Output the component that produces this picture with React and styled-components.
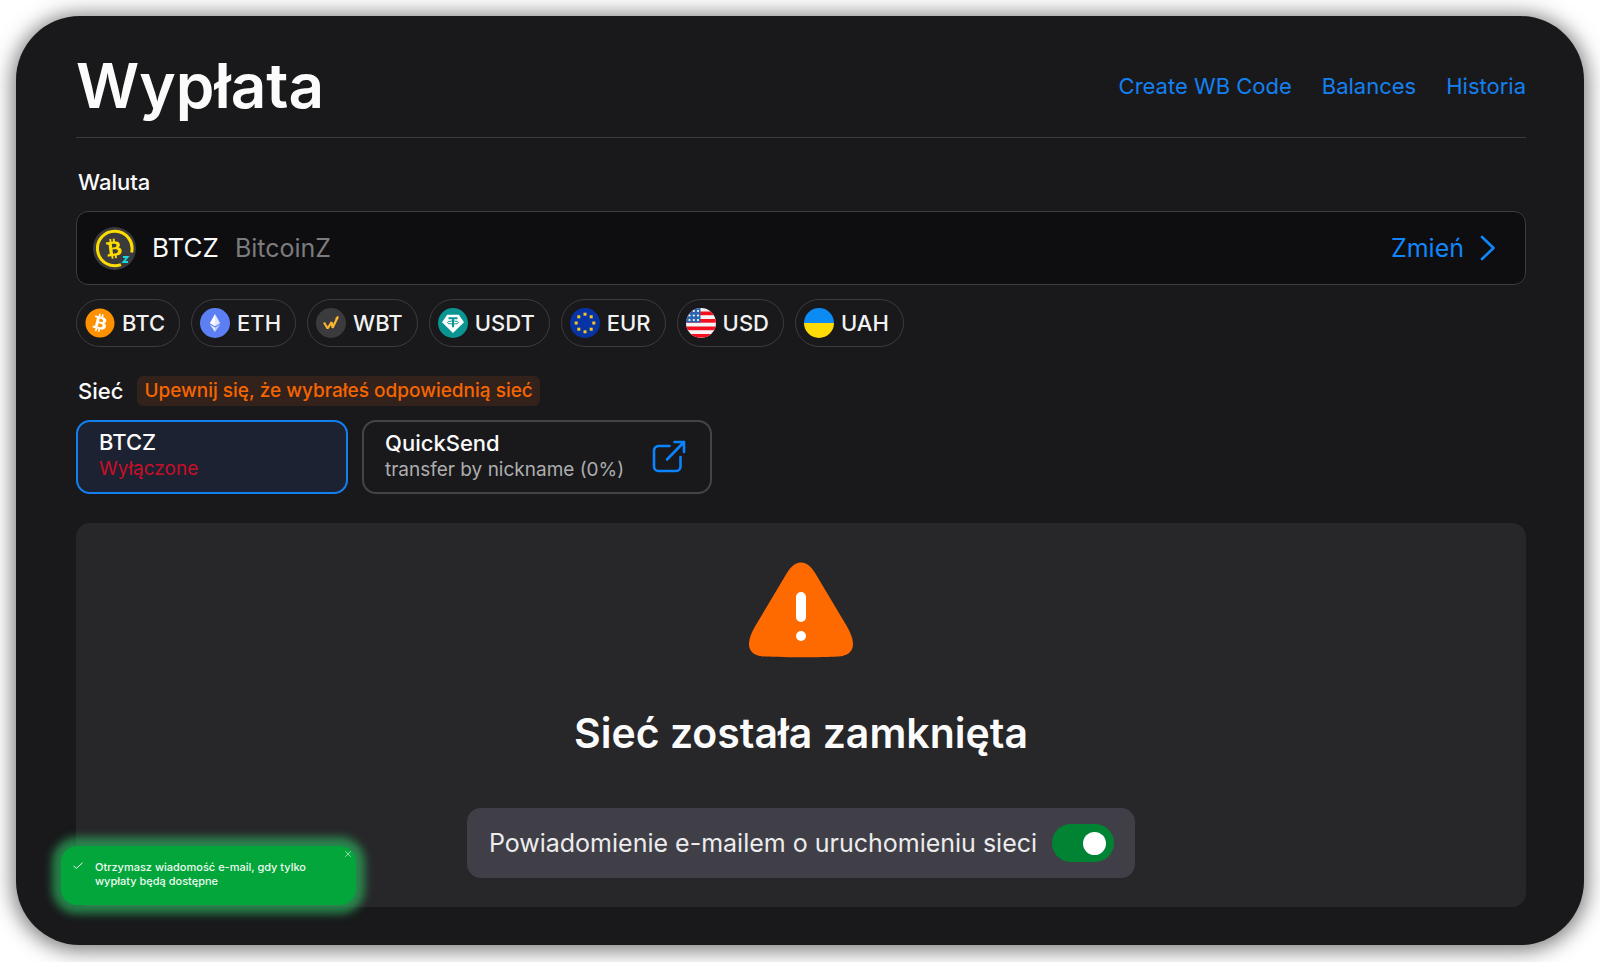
import React, { useState } from "react";
import styled, { createGlobalStyle, css } from "styled-components";
import { FaBitcoin, FaBtc } from "react-icons/fa";

const color = {
  page: "#19191b",
  field: "#0e0e10",
  panel: "#272729",
  line: "#3c3c3f",
  blue: "#1480f0",
  orange: "#ff6a00",
  white: "#fbfbfb",
};

const GlobalStyle = createGlobalStyle`
  *, *::before, *::after { box-sizing: border-box; }
  body { margin: 0; background: #fff; }
  body, button, input { font-family: Inter, "Liberation Sans", sans-serif; }
  button { background: none; border: 0; padding: 0; margin: 0; color: inherit; cursor: pointer; text-align: left; }
  h1, h2, p { margin: 0; }
  a { text-decoration: none; }
  svg { display: block; flex: none; }
`;

const Page = styled.div`
  padding: 16px 16px 17px;
`;

const Card = styled.main`
  position: relative;
  padding: 38px 58px 38px 60px;
  border-radius: 64px;
  background: ${color.page};
  color: ${color.white};
  box-shadow: 0 2px 20px 4px rgba(0, 0, 0, 0.5);
`;

const Header = styled.header`
  display: flex;
  align-items: center;
  justify-content: space-between;
  padding-bottom: 19px;
  border-bottom: 1px solid ${color.line};
`;

const Title = styled.h1`
  font-size: 62px;
  line-height: 64px;
  font-weight: 600;
`;

const Nav = styled.nav`
  display: flex;
  gap: 30px;
`;

const NavLink = styled.a`
  font-size: 22px;
  line-height: 28px;
  color: ${color.blue};
`;

const Section = styled.section`
  display: flex;
  flex-direction: column;
  gap: 14px;
  margin-top: 29px;
`;

const Label = styled.h2`
  padding-left: 2px;
  font-size: 22px;
  line-height: 30px;
  font-weight: 500;
`;

const LabelRow = styled.div`
  display: flex;
  align-items: center;
  gap: 14px;
`;

const Warning = styled.p`
  padding: 0 7px;
  border-radius: 6px;
  background: #33211c;
  color: #f56600;
  font-size: 19px;
  line-height: 30px;
  font-weight: 500;
`;

const CurrencyField = styled.div`
  display: flex;
  align-items: center;
  gap: 16px;
  height: 74px;
  padding: 0 30px 0 16px;
  border: 1px solid ${color.line};
  border-radius: 12px;
  background: ${color.field};
  line-height: 32px;
`;

const CurrencyCode = styled.span`
  font-size: 26px;
`;

const CurrencyName = styled.span`
  font-size: 25px;
  color: #7c7c7e;
`;

const ChangeButton = styled.button`
  display: flex;
  align-items: center;
  gap: 16px;
  margin-left: auto;
  font-size: 25px;
  line-height: 32px;
  color: #1186fa;
`;

const Chips = styled.div`
  display: flex;
  flex-wrap: wrap;
  gap: 11px;
`;

const Chip = styled.button`
  display: flex;
  align-items: center;
  gap: 7px;
  height: 48px;
  padding: 0 14px 0 8px;
  border: 1px solid ${color.line};
  border-radius: 24px;
  font-size: 22px;
  line-height: 28px;
  font-weight: 500;
  color: #f2f2f2;
`;

const Networks = styled.div`
  display: flex;
  flex-wrap: wrap;
  gap: 14px;
`;

const networkBox = css`
  display: flex;
  height: 74px;
  padding: 0 24px 0 21px;
  border: 2px solid ${(p) => (p.$selected ? color.blue : "#444447")};
  border-radius: 14px;
  background: ${(p) => (p.$selected ? "#1c2231" : "transparent")};
  color: ${color.white};
`;

const NetworkButton = styled.button`
  ${networkBox}
  align-items: flex-start;
  width: 272px;
  padding-top: 7px;
`;

const NetworkLink = styled.a`
  ${networkBox}
  align-items: center;
  gap: 28px;
`;

const NetworkText = styled.span`
  display: flex;
  flex-direction: column;
`;

const NetworkName = styled.span`
  font-size: 22px;
  line-height: 26px;
  font-weight: 500;
`;

const NetworkNote = styled.span`
  font-size: 19px;
  line-height: 28px;
  color: ${(p) => (p.$danger ? "#c90e28" : "#adadaf")};
`;

const Panel = styled.section`
  display: flex;
  flex-direction: column;
  align-items: center;
  gap: 48px;
  margin-top: 29px;
  padding: 39px 16px 29px;
  border-radius: 14px;
  background: ${color.panel};
`;

const PanelTitle = styled.h2`
  font-size: 41px;
  line-height: 54px;
  font-weight: 600;
`;

const NotifyRow = styled.label`
  display: flex;
  align-items: center;
  gap: 15px;
  height: 70px;
  padding: 0 21px 0 22px;
  border-radius: 14px;
  background: #403f47;
  font-size: 25px;
  line-height: 32px;
  color: #ececed;
`;

const Switch = styled.input.attrs({ type: "checkbox", role: "switch" })`
  appearance: none;
  display: flex;
  align-items: center;
  flex: none;
  width: 62px;
  height: 38px;
  margin: 0;
  padding: 0 8px;
  border-radius: 19px;
  background: #5b5b62;
  cursor: pointer;

  &::before {
    content: "";
    width: 23px;
    height: 23px;
    border-radius: 50%;
    background: #fff;
  }

  &:checked {
    justify-content: flex-end;
    background: #008434;
  }
`;

const Toast = styled.aside`
  position: absolute;
  left: 45px;
  bottom: 40px;
  display: flex;
  gap: 12px;
  width: 295px;
  height: 59px;
  padding: 14px 12px;
  border-radius: 16px;
  background: #02a63b;
  box-shadow: 0 0 8px 9px rgba(45, 190, 100, 0.62);
  color: #ecfaf0;
`;

const ToastText = styled.p`
  font-size: 11px;
  line-height: 14px;
  font-weight: 500;
`;

const ToastClose = styled.button`
  position: absolute;
  top: 5px;
  right: 5px;
`;

const Stroke = ({ size, d, stroke = "currentColor" }) => (
  <svg width={size} height={size} viewBox={`0 0 ${size} ${size}`} fill="none"
    stroke={stroke} strokeWidth="1" strokeLinecap="round" strokeLinejoin="round" aria-hidden="true">
    <path d={d} />
  </svg>
);

const BitcoinZIcon = () => (
  <svg width="43" height="43" viewBox="0 0 43 43" aria-hidden="true">
    <circle cx="21.5" cy="21.5" r="21.5" fill="#3b3b3d" />
    <path d="M28 37.6A17.3 17.3 0 1 1 38.6 25.5" fill="none" stroke="#fddc00" strokeWidth="3" />
    <g transform="rotate(-7 21 21.5)" color="#fddc00">
      <FaBtc x="11" y="11.5" size={20} />
    </g>
    <path d="M30 30h4.600l-4.200 5h4.600" fill="none" stroke="#12dbe6" strokeWidth="1.800" />
  </svg>
);

const BtcIcon = () => (
  <svg width="30" height="30" viewBox="0 0 30 30" aria-hidden="true">
    <circle cx="15" cy="15" r="13" fill="#fff" />
    <g color="#ff9100"><FaBitcoin size={30} /></g>
  </svg>
);

const EthIcon = () => (
  <svg width="30" height="30" viewBox="0 0 30 30" aria-hidden="true">
    <circle cx="15" cy="15" r="15" fill="#5c80f4" />
    <path d="M15 6l-5.200 9.200L15 18.200z" fill="#fff" />
    <path d="M15 6l5.200 9.200L15 18.200z" fill="#dfe6fd" />
    <path d="M9.800 16.600L15 24v-4.400z" fill="#e6ecfe" />
    <path d="M20.200 16.600L15 24v-4.400z" fill="#bfcdfb" />
  </svg>
);

const WbtIcon = () => (
  <svg width="30" height="30" viewBox="0 0 30 30" aria-hidden="true">
    <circle cx="15" cy="15" r="15" fill="#3b3b3d" />
    <path d="M8 14.500l3.600 6 4-6.300 1 5.600L21.700 9" fill="none" stroke="#fab72d" strokeWidth="2.200" strokeLinejoin="bevel" />
    <path d="M19 10.200l3.500-2.700-.4 4z" fill="#fab72d" />
  </svg>
);

const UsdtIcon = () => (
  <svg width="30" height="30" viewBox="0 0 30 30" aria-hidden="true">
    <circle cx="15" cy="15" r="15" fill="#0a9492" />
    <path d="M9.200 6.800h11.600l5.200 7.400L15 25 4 14.200z" fill="#fff" />
    <path d="M10.500 10.300h9M15 10.300v9" stroke="#0a9492" strokeWidth="2" />
    <ellipse cx="15" cy="14.500" rx="5.600" ry="1.500" fill="none" stroke="#0a9492" />
  </svg>
);

const STARS = [[15, 6.2], [21.2, 8.800], [23.8, 15], [21.2, 21.2], [15, 23.8], [8.800, 21.2], [6.2, 15], [8.800, 8.800]];

const EurIcon = () => (
  <svg width="30" height="30" viewBox="0 0 30 30" aria-hidden="true">
    <circle cx="15" cy="15" r="15" fill="#0734a4" />
    {STARS.map(([x, y]) => (
      <path key={`${x}-${y}`} d={`M${x - 1.5} ${y - 1.5}h3v3h-3z`} fill="#fbc81d" />
    ))}
  </svg>
);

const UsdIcon = () => (
  <svg width="30" height="30" viewBox="0 0 30 30" aria-hidden="true">
    <clipPath id="usd-round"><circle cx="15" cy="15" r="15" /></clipPath>
    <g clipPath="url(#usd-round)">
      <rect width="30" height="30" fill="#f5f5f5" />
      {[3.5, 11, 18.500, 26].map((y) => (
        <rect key={y} y={y} width="30" height="3.700" fill="#f5101f" />
      ))}
      <rect width="14.500" height="14.500" fill="#2a63ae" />
      {[3, 7.500, 12].map((y) => [3.500, 7.800, 12].map((x) => (
        <circle key={`${x}-${y}`} cx={x} cy={y} r="1.100" fill="#fff" />
      )))}
    </g>
  </svg>
);

const UahIcon = () => (
  <svg width="30" height="30" viewBox="0 0 30 30" aria-hidden="true">
    <path d="M0 15a15 15 0 0 1 30 0z" fill="#0d8bf5" />
    <path d="M0 15a15 15 0 0 0 30 0z" fill="#ffdb05" />
  </svg>
);

const AlertIcon = () => (
  <svg width="106" height="96" viewBox="0 0 106 96" aria-hidden="true">
    <path d="M53 .5c-6.500 0-11 5-15 12L7 64.500C3.500 70.500 1 76.500 1 82c0 7 4.500 10.500 10.500 12 7.500 1.700 75.500 1.700 83 0 6-1.500 10.500-5 10.500-12 0-5.500-2.500-11.500-6-17.500l-31-52C64 5.500 59.500 .5 53 .5z" fill={color.orange} />
    <rect x="48" y="30" width="10" height="30" rx="5" fill="#fff" />
    <circle cx="53" cy="74" r="5" fill="#fff" />
  </svg>
);

const ExternalIcon = () => (
  <svg width="34" height="34" viewBox="0 0 34 34" fill="none" stroke="#0a84ff" strokeWidth="2.600"
    strokeLinecap="round" strokeLinejoin="round" aria-hidden="true">
    <path d="M17.500 6H6.500A4.500 4.500 0 0 0 2 10.500v16A4.500 4.500 0 0 0 6.500 31H24a4.500 4.500 0 0 0 4.500-4.500V17" />
    <path d="M15 19.500L32 2M22.500 2H32v10" />
  </svg>
);

const ChevronIcon = () => (
  <svg width="15" height="26" viewBox="0 0 15 26" fill="none" stroke="#1186fa" strokeWidth="2.600"
    strokeLinecap="round" strokeLinejoin="round" aria-hidden="true">
    <path d="M2 2l11.500 11L2 24" />
  </svg>
);

const QUICK_PICKS = [
  ["BTC", BtcIcon],
  ["ETH", EthIcon],
  ["WBT", WbtIcon],
  ["USDT", UsdtIcon],
  ["EUR", EurIcon],
  ["USD", UsdIcon],
  ["UAH", UahIcon],
];

export default function App() {
  const [notify, setNotify] = useState(true);

  return (
    <Page>
      <GlobalStyle />
      <Card>
        <Header>
          <Title>Wypłata</Title>
          <Nav>
            <NavLink href="#code">Create WB Code</NavLink>
            <NavLink href="#balances">Balances</NavLink>
            <NavLink href="#history">Historia</NavLink>
          </Nav>
        </Header>

        <Section>
          <Label>Waluta</Label>
          <CurrencyField>
            <BitcoinZIcon />
            <CurrencyCode>BTCZ</CurrencyCode>
            <CurrencyName>BitcoinZ</CurrencyName>
            <ChangeButton type="button">Zmień<ChevronIcon /></ChangeButton>
          </CurrencyField>
          <Chips>
            {QUICK_PICKS.map(([code, Icon]) => (
              <Chip key={code} type="button"><Icon />{code}</Chip>
            ))}
          </Chips>
        </Section>

        <Section>
          <LabelRow>
            <Label>Sieć</Label>
            <Warning>Upewnij się, że wybrałeś odpowiednią sieć</Warning>
          </LabelRow>
          <Networks>
            <NetworkButton type="button" $selected aria-pressed="true">
              <NetworkText>
                <NetworkName>BTCZ</NetworkName>
                <NetworkNote $danger>Wyłączone</NetworkNote>
              </NetworkText>
            </NetworkButton>
            <NetworkLink href="#quicksend">
              <NetworkText>
                <NetworkName>QuickSend</NetworkName>
                <NetworkNote>transfer by nickname (0%)</NetworkNote>
              </NetworkText>
              <ExternalIcon />
            </NetworkLink>
          </Networks>
        </Section>

        <Panel>
          <AlertIcon />
          <PanelTitle>Sieć została zamknięta</PanelTitle>
          <NotifyRow>
            Powiadomienie e-mailem o uruchomieniu sieci
            <Switch checked={notify} onChange={(e) => setNotify(e.target.checked)} />
          </NotifyRow>
        </Panel>

        <Toast role="status">
          <Stroke size={10} d="M.7 6l2.500 2.500L9.300 3" />
          <ToastText>Otrzymasz wiadomość e-mail, gdy tylko<br />wypłaty będą dostępne</ToastText>
          <ToastClose type="button" aria-label="Zamknij">
            <Stroke size={6} d="M.5.5l5 5M5.500.5l-5 5" stroke="#8fdca8" />
          </ToastClose>
        </Toast>
      </Card>
    </Page>
  );
}
